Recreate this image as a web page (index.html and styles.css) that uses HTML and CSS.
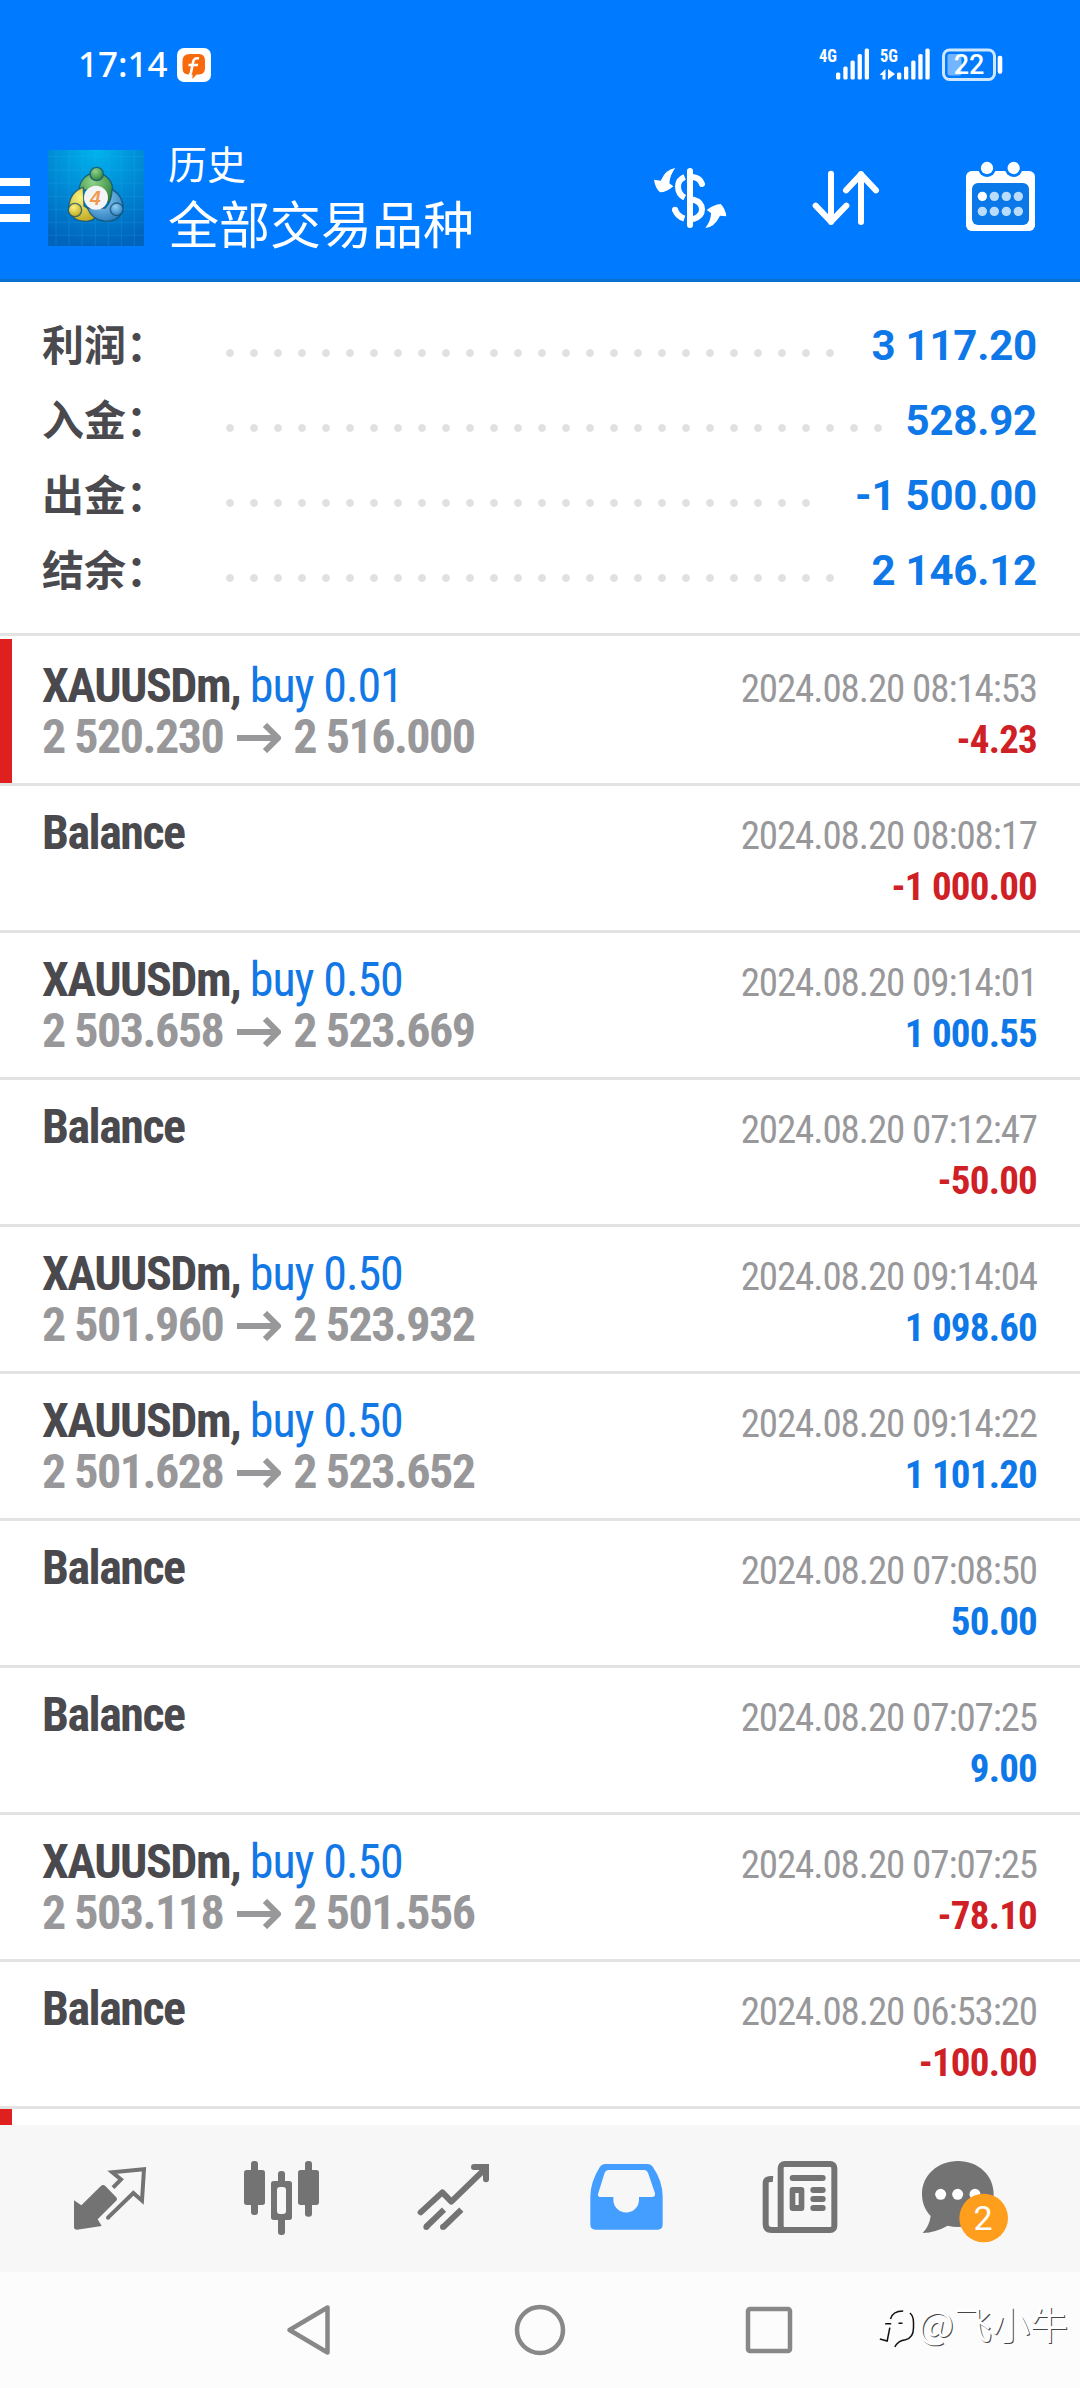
FILE: index.html
```
<!DOCTYPE html>
<html lang="zh-CN">
<head>
<meta charset="utf-8">
<title>历史</title>
<link rel="stylesheet" href="styles.css">
</head>
<body>
<div class="screen">
  <header class="header">
    <div class="status">
      <div class="status-left">
        <span class="clock">17:14</span>
        <svg class="notif" viewBox="0 0 34 34">
          <rect width="34" height="34" rx="7" fill="#fff"/>
          <path d="M13 6h9q6 0 6 7v7q0 6-6 6.500h-2.500l-4 4.500v-4.500h-4q-6 0-6-6.500v-7q0-7 7.500-7z" fill="#f8680c"/>
          <path d="M22 10.500q-5-1.500-6 4l-2 10q-.5 2-2 2M11.500 17h9.500" fill="none" stroke="#fff" stroke-width="2.600"/>
        </svg>
      </div>
      <svg class="signals" viewBox="0 0 190 40">
        <g fill="#fff">
          <text class="net" x="5" y="18" textLength="18" lengthAdjust="spacingAndGlyphs">4G</text>
          <rect x="22" y="28.500" width="4.300" height="7" rx="1.500"/><rect x="29.300" y="22.500" width="4.300" height="13" rx="1.500"/><rect x="36.500" y="16.500" width="4.300" height="19" rx="1.500"/><rect x="43.600" y="10" width="4.300" height="25.500" rx="1.500"/><rect x="50.700" y="4.500" width="4.300" height="31" rx="1.500"/>
          <text class="net" x="66" y="18" textLength="18" lengthAdjust="spacingAndGlyphs">5G</text>
          <path d="M65.500 31l6-6v10.500h-3v-4.500zM74 25v10.500l7-5.500z"/>
          <rect x="83" y="28.500" width="4.300" height="7" rx="1.500"/><rect x="90" y="22.500" width="4.300" height="13" rx="1.500"/><rect x="97.200" y="16.500" width="4.300" height="19" rx="1.500"/><rect x="104.300" y="10" width="4.300" height="25.500" rx="1.500"/><rect x="111.400" y="4.500" width="4.300" height="31" rx="1.500"/>
          <rect x="183.700" y="11.700" width="4.600" height="18" rx="2"/>
          <rect x="133.500" y="10" width="14" height="21.500" rx="2" opacity=".45"/>
        </g>
        <rect x="129.500" y="6" width="51" height="29.500" rx="6" fill="none" stroke="#cfe6ff" stroke-width="3"/>
        <text class="level" x="155" y="29.500" text-anchor="middle" fill="#fff">22</text>
      </svg>
    </div>
    <div class="bar">
      <div class="burger"><i></i><i></i><i></i></div>
      <svg class="logo" viewBox="24 30 288 288">
        <defs>
          <radialGradient id="sky" cx=".5" cy="0" r="1"><stop offset="0" stop-color="#00b4ec"/><stop offset=".5" stop-color="#008ad6"/><stop offset="1" stop-color="#0064bd"/></radialGradient>
          <radialGradient id="gr" cx=".4" cy=".3" r=".8"><stop offset="0" stop-color="#8fd389"/><stop offset="1" stop-color="#237c33"/></radialGradient>
          <radialGradient id="ye" cx=".4" cy=".3" r=".8"><stop offset="0" stop-color="#fbf27c"/><stop offset="1" stop-color="#b9a21a"/></radialGradient>
          <radialGradient id="bl" cx=".4" cy=".3" r=".8"><stop offset="0" stop-color="#8fd0f5"/><stop offset="1" stop-color="#2275b9"/></radialGradient>
        </defs>
        <rect x="24" y="30" width="288" height="288" fill="url(#sky)"/>
        <path d="M48 30v288M87 30v288M126 30v288M166 30v288M205 30v288M244 30v288M283 30v288M24 50h288M24 90h288M24 129h288M24 169h288M24 208h288M24 247h288M24 286h288" stroke="#36b2ee" stroke-opacity=".3" stroke-width="2"/>
        <g stroke="#124e6e" stroke-opacity=".75" stroke-width="4">
          <path d="M118 150a50 50 0 0 1 100-2q2 26-12 42l-26-40z" fill="url(#gr)"/>
          <path d="M130 142q-40 12-44 62 6 40 54 40 24-2 34-22l-42-24z" fill="url(#ye)"/>
          <path d="M216 148q36 22 32 58-6 38-52 38-40-4-54-40h54q20-20 20-56z" fill="url(#bl)"/>
          <circle cx="170" cy="102" r="20" fill="url(#gr)"/>
          <circle cx="105" cy="210" r="20" fill="url(#ye)"/>
          <circle cx="230" cy="208" r="19" fill="url(#bl)"/>
        </g>
        <circle cx="168" cy="173" r="36" fill="#f4f4f6"/>
        <text class="four" x="166" y="194" text-anchor="middle">4</text>
      </svg>
      <div class="titles"><div class="t1">历史</div><div class="t2">全部交易品种</div></div>
      <div class="actions">
        <svg viewBox="150 414 240 240">
          <g fill="none" stroke="#fff">
            <path d="M270 453v162" stroke-width="18" stroke-linecap="round"/>
            <path d="M278 471q22 2 28 21" stroke-width="18" stroke-linecap="round"/>
            <path d="M254 471q-20 8-20 28 0 24 20 34" stroke-width="18"/>
            <path d="M278 538q28 8 28 30 0 22-28 30" stroke-width="18"/>
            <path d="M225 568q5 20 28 28" stroke-width="18"/>
          </g>
          <circle cx="225" cy="569" r="9" fill="#fff"/>
          <path d="M226 444q-28 3-44 38l-20-3q4 26 18 38 20 0 40-18l-12-9q2-26 18-46z" fill="#fff"/>
          <path d="M316 624q28-3 44-37l19 2q-3-24-17-37-20 2-42 18l13 9q0 23-17 45z" fill="#fff"/>
        </svg>
        <svg viewBox="615 414 240 240">
          <path d="M693 461v145M647 557l46 48 46-48M783 606V462M738 511l45-48 45 48" fill="none" stroke="#fff" stroke-width="18" stroke-linecap="round" stroke-linejoin="round"/>
        </svg>
        <svg viewBox="1080 414 240 240">
          <rect x="1098" y="453" width="207" height="180" rx="17" fill="#fff"/>
          <circle cx="1161" cy="444" r="27" fill="#007aff"/><circle cx="1241" cy="444" r="27" fill="#007aff"/>
          <circle cx="1161" cy="444" r="18.500" fill="#fff"/><circle cx="1241" cy="444" r="18.500" fill="#fff"/>
          <rect x="1116" y="489" width="171" height="126" rx="18" fill="#0a78e8"/>
          <g fill="#b9dcfb"><circle cx="1147" cy="529" r="14" fill="#fff"/><circle cx="1183" cy="529" r="14"/><circle cx="1219" cy="529" r="14"/><circle cx="1255" cy="529" r="14"/><circle cx="1147" cy="574" r="14"/><circle cx="1183" cy="574" r="14"/><circle cx="1219" cy="574" r="14"/><circle cx="1255" cy="574" r="14"/></g>
        </svg>
      </div>
    </div>
  </header>

  <section class="summary">
    <div class="sum"><span class="label">利润：</span><span class="leader"><i></i></span><span class="value">3 117.20</span></div>
    <div class="sum"><span class="label">入金：</span><span class="leader"><i></i></span><span class="value">528.92</span></div>
    <div class="sum"><span class="label">出金：</span><span class="leader"><i></i></span><span class="value">-1 500.00</span></div>
    <div class="sum"><span class="label">结余：</span><span class="leader"><i></i></span><span class="value">2 146.12</span></div>
  </section>

  <main class="deals">
    <article class="deal marked"><div class="left"><div class="sym">XAUUSDm, <span>buy 0.01</span></div><div class="price">2 520.230<svg class="arrow" viewBox="0 0 44 30"><path d="M0 15h40M28 2l13 13-13 13" /></svg>2 516.000</div></div><div class="right"><div class="date">2024.08.20 08:14:53</div><div class="amt neg">-4.23</div></div></article>
    <article class="deal"><div class="left"><div class="sym bal">Balance</div></div><div class="right"><div class="date">2024.08.20 08:08:17</div><div class="amt neg">-1 000.00</div></div></article>
    <article class="deal"><div class="left"><div class="sym">XAUUSDm, <span>buy 0.50</span></div><div class="price">2 503.658<svg class="arrow" viewBox="0 0 44 30"><path d="M0 15h40M28 2l13 13-13 13" /></svg>2 523.669</div></div><div class="right"><div class="date">2024.08.20 09:14:01</div><div class="amt">1 000.55</div></div></article>
    <article class="deal"><div class="left"><div class="sym bal">Balance</div></div><div class="right"><div class="date">2024.08.20 07:12:47</div><div class="amt neg">-50.00</div></div></article>
    <article class="deal"><div class="left"><div class="sym">XAUUSDm, <span>buy 0.50</span></div><div class="price">2 501.960<svg class="arrow" viewBox="0 0 44 30"><path d="M0 15h40M28 2l13 13-13 13" /></svg>2 523.932</div></div><div class="right"><div class="date">2024.08.20 09:14:04</div><div class="amt">1 098.60</div></div></article>
    <article class="deal"><div class="left"><div class="sym">XAUUSDm, <span>buy 0.50</span></div><div class="price">2 501.628<svg class="arrow" viewBox="0 0 44 30"><path d="M0 15h40M28 2l13 13-13 13" /></svg>2 523.652</div></div><div class="right"><div class="date">2024.08.20 09:14:22</div><div class="amt">1 101.20</div></div></article>
    <article class="deal"><div class="left"><div class="sym bal">Balance</div></div><div class="right"><div class="date">2024.08.20 07:08:50</div><div class="amt">50.00</div></div></article>
    <article class="deal"><div class="left"><div class="sym bal">Balance</div></div><div class="right"><div class="date">2024.08.20 07:07:25</div><div class="amt">9.00</div></div></article>
    <article class="deal"><div class="left"><div class="sym">XAUUSDm, <span>buy 0.50</span></div><div class="price">2 503.118<svg class="arrow" viewBox="0 0 44 30"><path d="M0 15h40M28 2l13 13-13 13" /></svg>2 501.556</div></div><div class="right"><div class="date">2024.08.20 07:07:25</div><div class="amt neg">-78.10</div></div></article>
    <article class="deal"><div class="left"><div class="sym bal">Balance</div></div><div class="right"><div class="date">2024.08.20 06:53:20</div><div class="amt neg">-100.00</div></div></article>
    <article class="deal marked"></article>
  </main>

  <nav class="tabs">
    <svg viewBox="6 30 288 288">
      <path d="M42 181l22 15 58-57q7-8 14-1l32 33q6 6 0 12l-55 55 12 20-74 11q-9 0-9-8z" fill="#737373"/>
      <path d="M159 143l24-25-26-21 95-9-6 94-26-23-76 74" fill="none" stroke="#737373" stroke-width="12"/>
      <circle cx="144" cy="233" r="6" fill="#737373"/>
    </svg>
    <svg viewBox="522 30 288 288" fill="#737373">
      <rect x="573" y="63" width="21" height="162" rx="9"/><rect x="552" y="90" width="63" height="105" rx="8"/>
      <rect x="735" y="63" width="21" height="167" rx="9"/><rect x="714" y="90" width="63" height="105" rx="8"/>
      <rect x="654" y="93" width="21" height="192" rx="9"/><rect x="633" y="123" width="63" height="117" rx="8"/>
      <rect x="651" y="141" width="27" height="81" rx="9" fill="#f7f7f7"/>
    </svg>
    <svg viewBox="18 30 288 288" fill="none" stroke="#737373" stroke-width="18">
      <path d="M62 217l65-60 27 28L256 86" stroke-linejoin="round" stroke-linecap="round"/>
      <path d="M222 81h36v37" stroke-linecap="round"/>
      <path d="M78 261l54-52M130 261l54-52"/><circle cx="79" cy="261" r="9" fill="#737373" stroke="none"/><circle cx="129" cy="261" r="9" fill="#737373" stroke="none"/>
    </svg>
    <svg viewBox="534 30 288 288">
      <path d="M616 72h126q10 0 17 10 28 40 29 87v84q0 16-15 16H586q-15 0-15-16v-84q1-44 28-87 7-10 17-10z" fill="#439eff"/>
      <path d="M625 90h108q8 0 11 8l21 62q2 11-9 11h-39v8a37 37 0 0 1-77 0v-8h-39q-10 0-6-12l19-61q3-8 11-8z" fill="#f7f7f7"/>
    </svg>
    <svg viewBox="30 30 288 288" fill="#737373">
      <rect x="122" y="72" width="161" height="198" rx="12" fill="none" stroke="#737373" stroke-width="18"/>
      <path d="M99 117q-22-2-22 12v123q0 18 18 18h40" fill="none" stroke="#737373" stroke-width="18"/>
      <rect x="149" y="105" width="108" height="18" rx="9"/>
      <rect x="149" y="141" width="44" height="72" rx="9"/><rect x="166" y="159" width="10" height="36" fill="#f7f7f7"/>
      <rect x="211" y="141" width="46" height="18" rx="9"/><rect x="211" y="168" width="46" height="18" rx="9"/><rect x="211" y="195" width="46" height="18" rx="9"/>
    </svg>
    <svg viewBox="546 30 288 288">
      <path d="M654 63c60 0 107 42 107 99s-46 99-107 99q-16 0-31-4-35 20-75 22 20-20 24-51c-17-18-26-40-26-66 0-57 48-99 108-99z" fill="#737373"/>
      <circle cx="602" cy="163" r="16.500" fill="#fff"/><circle cx="653" cy="163" r="16.500" fill="#fff"/><circle cx="705" cy="163" r="16.500" fill="#fff"/>
      <circle cx="731" cy="234" r="73" fill="#ff9d1c"/>
      <text class="count" x="729" y="270" text-anchor="middle">2</text>
    </svg>
  </nav>

  <footer class="sysnav">
    <svg class="keys" viewBox="0 0 520 60" fill="none" stroke="#888" stroke-width="4.500" stroke-linejoin="round">
      <path d="M9.500 30L47.500 7.500v45z"/>
      <circle cx="260" cy="30" r="23"/>
      <rect x="468" y="9" width="42" height="42" rx="2"/>
    </svg>
    <div class="mark">
      <svg viewBox="55 70 110 120"><path d="M92 100q6-24 38-24M76 114h18M116 113h12M60 160l22 6 8-40M150 82q11 8 11 28v16q0 30-24 36-22 2-32 22" fill="none" stroke="#111" stroke-width="4.500"/></svg>
      <span>@飞小牛</span>
    </div>
  </footer>
</div>
</body>
</html>
```
FILE: styles.css
```
* { box-sizing: border-box; }
body { margin: 0; background: #fff; }
.screen { width: 1080px; height: 2388px; display: flex; flex-direction: column; overflow: hidden; font-family: "Roboto", "Noto Sans CJK SC", sans-serif; }
svg { display: block; flex: none; }

.header { height: 282px; background: #007aff; border-bottom: 3px solid #0b6fd0; color: #fff; }
.status { height: 130px; display: flex; justify-content: space-between; align-items: flex-start; padding: 43px 76px 0 78px; }
.status-left { display: flex; align-items: flex-start; gap: 8px; }
.clock { width: 91px; font: 500 35px/42px "Noto Sans", "Noto Sans CJK SC", sans-serif; white-space: nowrap; }
.notif { width: 34px; height: 34px; margin-top: 5px; }
.signals { width: 190px; height: 40px; margin-top: 1px; }
.net { font: 700 19px "Roboto Condensed", sans-serif; }
.level { font: 500 27px "Roboto", sans-serif; }

.bar { display: flex; align-items: flex-start; padding: 5px 40px 0 0; }
.burger { display: flex; flex-direction: column; gap: 10px; width: 30px; margin-top: 43px; }
.burger i { height: 8px; background: #fff; }
.logo { width: 96px; height: 96px; margin: 15px 0 0 18px; }
.four { font: 700 58px "Liberation Sans", sans-serif; font-style: italic; fill: #ef9a4e; }
.titles { margin-left: 24px; font-family: "Noto Sans CJK SC", sans-serif; white-space: nowrap; }
.t1 { font-size: 39px; line-height: 54px; }
.t2 { font-size: 51px; line-height: 67px; }
.actions { display: flex; gap: 75px; margin: 23px 0 0 auto; }
.actions svg { width: 80px; height: 80px; }

.summary { height: 354px; padding: 26px 43px 0 42px; border-bottom: 3px solid #e3e3e3; }
.sum { display: flex; height: 75px; line-height: 75px; font-weight: 700; font-size: 42px; white-space: nowrap; }
.label { width: 176px; font-family: "Noto Sans CJK SC", sans-serif; line-height: 69px; color: #4a4a4e; }
.leader { flex: 1; margin-right: 14px; }
.leader i { display: block; width: round(down, 100%, 24px); height: 8px; margin-top: 41px; background: radial-gradient(circle at center, #e0e0e0 3.400px, transparent 4.400px) 0 0 / 24px 8px repeat-x; }
.value { color: #0f78e8; letter-spacing: -0.2px; }

.deals { flex: 1; min-height: 0; overflow: hidden; padding-top: 3px; }
.deal { display: flex; justify-content: space-between; height: 147px; padding: 21px 43px 0 42px; border-bottom: 3px solid #e3e3e3; font-family: "Roboto Condensed", "Roboto", sans-serif; white-space: nowrap; }
.deal.marked { background: linear-gradient(#e01f1f, #e01f1f) 0 0 / 12px 100% no-repeat; }
.sym { font-size: 48px; line-height: 51px; font-weight: 700; color: #4a4a4e; letter-spacing: -1.5px; }
.sym span { font-weight: 400; color: #1278e6; letter-spacing: -1.1px; }
.price { display: flex; font-size: 48px; line-height: 51px; font-weight: 700; color: #98989b; letter-spacing: -1.5px; }
.arrow { width: 44px; height: 30px; margin: 12px 12px 0 14px; }
.arrow path { fill: none; stroke: #98989b; stroke-width: 6; }
.right { padding-top: 4px; text-align: right; font-size: 39px; line-height: 51px; }
.date { color: #98989b; letter-spacing: -1.1px; }
.amt { font-weight: 700; color: #0f78e8; letter-spacing: -0.8px; }
.amt.neg { color: #cf2026; }

.tabs { display: flex; height: 147px; padding: 25px 24px 0; background: #f7f7f7; }
.tabs svg { width: 96px; height: 96px; margin: 0 38px; }
.count { font: 400 102px "Roboto", sans-serif; fill: #fff; }

.sysnav { display: flex; height: 116px; padding: 28px 12px 0 280px; background: #fcfcfc; }
.keys { width: 520px; height: 60px; }
.mark { display: flex; margin-left: auto; margin-top: -4px; white-space: nowrap; }
.mark svg { width: 37px; height: 40px; margin: 13px 3px 0 0; }
.mark span { font: 400 38px/54px "Noto Sans CJK SC", sans-serif; color: #fff; text-shadow: 1px 1px 0 #444; }
```
